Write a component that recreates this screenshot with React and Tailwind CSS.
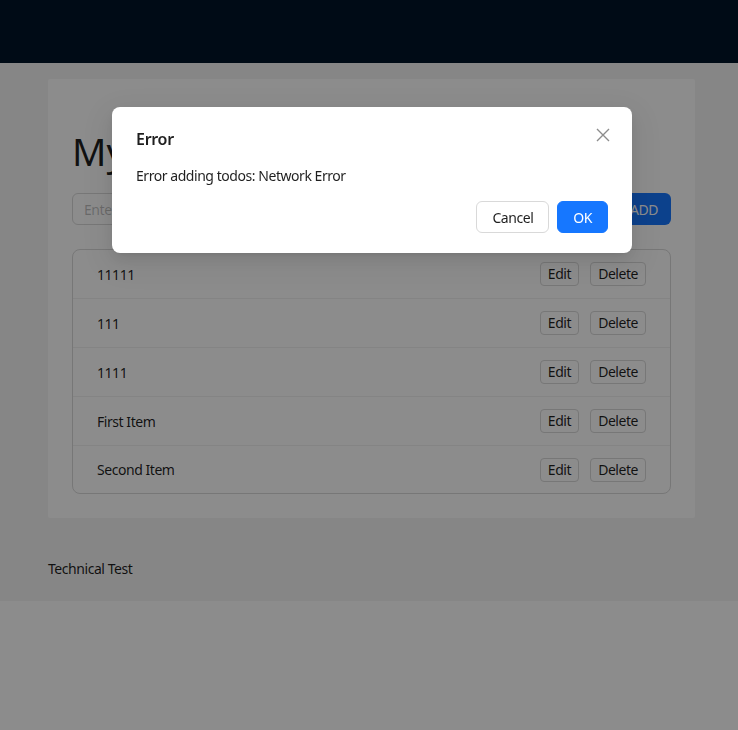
import React from "react";

const items = ["11111", "111", "1111", "First Item", "Second Item"];

export default function App() {
  return (
    <div className="relative min-h-[730px] bg-white text-[14px] tracking-[-0.45px] text-[rgba(0,0,0,0.88)] font-['Segoe_UI','Noto_Sans',sans-serif]">
      <div className="min-h-[601px] bg-[#f5f5f5] flex flex-col">
        <header className="h-[63px] bg-[#001529]" />
        <main className="pt-[16px] pl-[48px]">
          <div className="w-[647px] bg-white px-[24px] pt-[24px] pb-[24px] rounded-[2px]">
            <h1 className="mt-[25px] mb-[19px] text-[38px] leading-[46px] font-normal tracking-normal text-[rgba(0,0,0,0.88)]">
              My Todo List
            </h1>
            <div className="flex gap-[8px]">
              <input
                className="h-[32px] flex-1 rounded-[6px] border border-[#d9d9d9] bg-white px-[11px] text-[14px] outline-none placeholder:text-[rgba(0,0,0,0.25)]"
                placeholder="Enter todo"
              />
              <button className="h-[32px] w-[54px] rounded-[6px] bg-[#1677ff] text-white text-[14px]">ADD</button>
            </div>
            <ul className="mt-[24px] rounded-[8px] border border-[#d9d9d9]">
              {items.map((t, i) => (
                <li
                  key={t}
                  className={`flex items-center justify-between px-[24px] ${i < items.length - 1 ? "h-[49px] border-b border-[#f0f0f0]" : "h-[47px]"}`}
                >
                  <span>{t}</span>
                  <div className="flex gap-[11px]">
                    <button className="h-[24px] rounded-[4px] border border-[#d9d9d9] bg-white px-[7px] text-[14px] leading-[22px]">Edit</button>
                    <button className="h-[24px] rounded-[4px] border border-[#d9d9d9] bg-white px-[7px] text-[14px] leading-[22px]">Delete</button>
                  </div>
                </li>
              ))}
            </ul>
          </div>
        </main>
        <footer className="flex-1 pl-[48px] pt-[40px] leading-[22px]">Technical Test</footer>
      </div>

      <div className="fixed inset-0 bg-black/45" />

      <div className="absolute left-[112px] top-[107px] w-[520px] rounded-[8px] bg-white px-[24px] pt-[20px] pb-[20px] shadow-[0_6px_16px_0_rgba(0,0,0,0.08),0_3px_6px_-4px_rgba(0,0,0,0.12),0_9px_28px_8px_rgba(0,0,0,0.05)]">
        <div className="text-[16px] leading-[24px] font-semibold tracking-[-0.3px] text-[rgba(0,0,0,0.88)]">Error</div>
        <svg className="absolute right-[21px] top-[20px]" width="16" height="16" viewBox="0 0 16 16">
          <path d="M2 2 L14 14 M14 2 L2 14" stroke="rgba(0,0,0,0.45)" strokeWidth="1.4" fill="none" />
        </svg>
        <div className="mt-[14px] leading-[22px]">Error adding todos: Network Error</div>
        <div className="mt-[14px] flex justify-end gap-[8px]">
          <button className="h-[32px] rounded-[6px] border border-[#d9d9d9] bg-white px-[15px] text-[14px]">Cancel</button>
          <button className="h-[32px] rounded-[6px] border border-[#1677ff] bg-[#1677ff] px-[15px] text-[14px] text-white">OK</button>
        </div>
      </div>
    </div>
  );
}
